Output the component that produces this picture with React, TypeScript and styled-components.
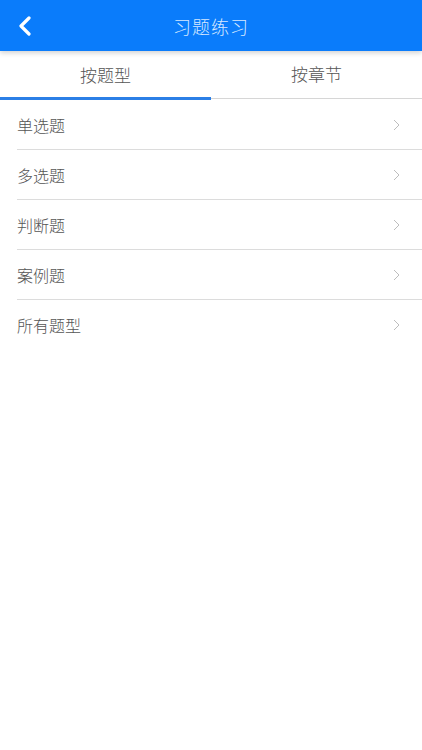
import React, { useState } from "react";
import styled, { createGlobalStyle } from "styled-components";

const Global = createGlobalStyle`
  html, body {
    margin: 0;
    padding: 0;
    background: #fff;
    font-family: "Noto Sans CJK SC", "Noto Sans", sans-serif;
  }
`;

const tabs = ["按题型", "按章节"];
const items = ["单选题", "多选题", "判断题", "案例题", "所有题型"];

const App = () => {
  const [active, setActive] = useState(0);

  return (
    <Page>
      <Global />
      <Header>
        <Back>
          <svg width="14" height="20" viewBox="0 0 14 20">
            <path d="M11 2 L3 10 L11 18" fill="none" stroke="#fff" strokeWidth="3.2" strokeLinecap="round" strokeLinejoin="round" />
          </svg>
        </Back>
        <Title>习题练习</Title>
      </Header>

      <Tabs>
        {tabs.map((t, i) => (
          <Tab key={t} $active={i === active} onClick={() => setActive(i)}>
            {t}
          </Tab>
        ))}
      </Tabs>

      <List>
        {items.map((item, i) => (
          <Row key={item} $last={i === items.length - 1}>
            <span>{item}</span>
            <Arrow viewBox="0 0 7 12" width="7" height="12">
              <path d="M1 1 L6 6 L1 11" fill="none" stroke="#bdbdbd" strokeWidth="1" />
            </Arrow>
          </Row>
        ))}
      </List>
    </Page>
  );
};

const Page = styled.div`
  width: 422px;
  min-height: 750px;
  background: #fff;
`;

const Header = styled.div`
  position: relative;
  z-index: 1;
  height: 51px;
  background: #0a7cfb;
  display: flex;
  align-items: center;
  justify-content: center;
  box-shadow: 0 2px 5px rgba(0, 0, 0, 0.18);
`;

const Back = styled.div`
  position: absolute;
  left: 18px;
  top: 16px;
  display: flex;
`;

const Title = styled.h1`
  margin: 0;
  font-size: 18px;
  font-weight: 300;
  letter-spacing: 1px;
  color: #d6e8ff;
`;

const Tabs = styled.div`
  display: flex;
  height: 49px;
`;

const Tab = styled.div<{ $active: boolean }>`
  flex: 1;
  display: flex;
  align-items: center;
  justify-content: center;
  font-size: 17px;
  font-weight: 300;
  color: #555;
  box-sizing: border-box;
  border-bottom: ${(p) => (p.$active ? "3px solid #2b7fe6" : "1px solid #d6d6d6")};
  ${(p) => (!p.$active ? "padding-bottom: 2px; height: 48px;" : "")}
  cursor: pointer;
`;

const List = styled.div`
  padding-left: 17px;
`;

const Row = styled.div<{ $last: boolean }>`
  height: 49px;
  display: flex;
  align-items: center;
  justify-content: space-between;
  padding-right: 22px;
  border-bottom: 1px solid ${(p) => (p.$last ? "transparent" : "#dcdcdc")};
  font-size: 16px;
  font-weight: 300;
  color: #555;
`;

const Arrow = styled.svg`
  display: block;
`;

export default App;
